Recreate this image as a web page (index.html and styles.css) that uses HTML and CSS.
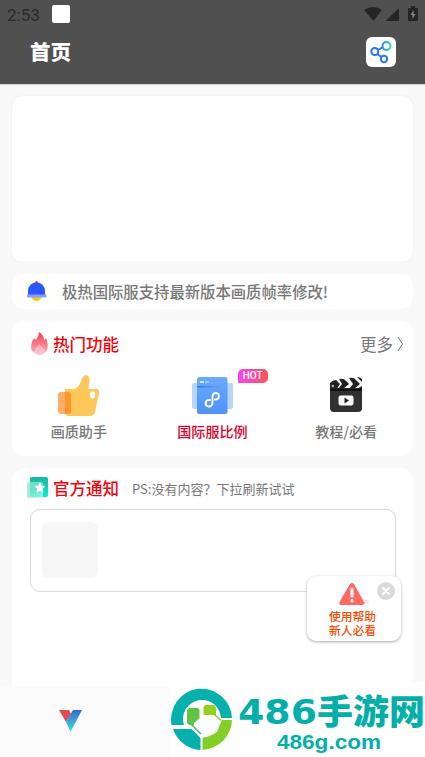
FILE: index.html
```html
<!DOCTYPE html>
<html lang="zh-CN">
<head>
<meta charset="utf-8">
<title>首页</title>
<link rel="stylesheet" href="styles.css">
</head>
<body>
<header class="header">
  <div class="status">
    <span class="time">2:53</span><span class="chip"></span>
    <svg class="signals" width="56" height="18" viewBox="0 0 56 18">
      <path d="M0 5Q9 -1 18 5L9.500 16Z"/><path d="M35 3V16H21.500Z"/>
      <path d="M45 3h2V1h4v2h2q1 0 1 1v11q0 1-1 1h-8q-1 0-1-1V4q0-1 1-1Z"/>
      <path class="bolt" d="M49.500 5L46.500 10H48.500V14L51.500 9H49.500Z"/>
    </svg>
  </div>
  <div class="titlebar">
    <h1>首页</h1>
    <div class="share">
      <svg width="30" height="30" viewBox="0 0 30 30" fill="none" stroke-width="2">
        <defs><linearGradient id="sg" x1="0" x2="1"><stop stop-color="#278de8"/><stop offset="1" stop-color="#35d6b2"/></linearGradient></defs>
        <path d="M12 13L17 10M11 17L16 20" stroke="#2873f0"/><circle cx="8.800" cy="14.500" r="3.500" stroke="#2873ff"/><circle cx="20.500" cy="9" r="4" stroke="url(#sg)"/><circle cx="18" cy="22" r="3.200" stroke="#2873ff"/>
      </svg>
    </div>
  </div>
</header>
<main class="content">
  <section class="banner"></section>
  <section class="notice">
    <svg width="20" height="20" viewBox="0 0 20 20"><circle cx="9.500" cy="1.500" r="1.500" fill="#f33748"/><path d="M4 16h11q-2 4-5.500 4T4 16Z" fill="#ffc919"/><path d="M1 14V10a8.500 8.800 0 0 1 17 0v4Z" fill="#2857ff"/><rect y="13.500" width="19.500" height="3" rx="1" fill="#829eff"/></svg>
    <span>极热国际服支持最新版本画质帧率修改!</span>
  </section>
  <section class="features">
    <div class="heading">
      <svg width="20" height="24" viewBox="0 0 20 24">
        <defs><linearGradient id="fg" x2="0" y2="1"><stop stop-color="#f63e49"/><stop offset="1" stop-color="#ffb1bc"/></linearGradient><filter id="soft" x="-20%" y="-20%" width="140%" height="140%"><feGaussianBlur stdDeviation=".65"/></filter></defs>
        <path d="M10 0q5 3 5 8l2-2q3 8 1 12-3 5-8 4-8-1-8-7 0-5 3-9l2 2q3-4 3-8Z" fill="url(#fg)" filter="url(#soft)"/><path d="M10 12q4 3 6 7-2 4-6 4-4 0-5-4 2 0 2-3 2-1 3-4Z" fill="#ffc0cc" opacity=".85"/>
      </svg>
      <h2>热门功能</h2><span class="more">更多</span>
      <svg class="arrow" width="7" height="16" viewBox="0 0 7 16" fill="none" stroke="#777"><path d="M1 1L5.500 8L1 15"/></svg>
    </div>
    <div class="grid">
      <div class="item">
        <svg width="44" height="44" viewBox="0 0 44 44"><path d="M8 16h10q4-2 6-8 2-6 5-6 6 1 2 14h8q4 0 3 4l-4 19q-1 4-5 4H12q-4 0-4-4Z" fill="#ffc75a"/><rect x="33" y="18.500" width="5" height="7" rx="2" fill="#fff"/><rect x="1" y="19" width="13" height="22" rx="3" fill="#ffae6a"/><path d="M8 19h3q3 0 3 3v16q0 3-3 3H8Z" fill="#ff962c"/></svg>
        <span>画质助手</span>
      </div>
      <div class="item selected">
        <svg width="42" height="38" viewBox="0 0 42 38"><defs><linearGradient id="bg" x2="0" y2="1"><stop stop-color="#6aabff"/><stop offset="1" stop-color="#4d91fa"/></linearGradient><linearGradient id="line"><stop stop-color="#347bdd"/><stop offset="1" stop-color="#60a4fc"/></linearGradient></defs><rect x="1" y="7" width="41" height="26" rx="2" fill="#b7d5ff"/><rect x="6" y="1" width="30.500" height="37" rx="2.500" fill="url(#bg)"/><path d="M6 10h24v1.500H6Z" fill="url(#line)"/><path d="M9 6h4" stroke="#fff" stroke-width="1.500"/><path d="M14 6h4" stroke="#a9d0ff" stroke-width="1.500"/><path d="M19 24c-5-1-6 6-1.500 6.500 3 .3 4-2 4-4.500v-5c0-2 1-4 3.500-4 4.500 .5 3.500 7-1 6.500" fill="none" stroke="#fff" stroke-width="2" stroke-linecap="round"/></svg>
        <span>国际服比例</span><b class="hot">HOT</b>
      </div>
      <div class="item">
        <svg width="34" height="36" viewBox="0 0 34 36"><path d="M1 11h32v20q0 4-4 4H5q-4 0-4-4Z" fill="#303030"/><path d="M1 11V6q3-3 6-3l4 4-4 6H1ZM10 2q5-1 7 2l3 3-6 5H9l4-5ZM20 1q5-1 7 2l4 4-6 5h-5l4-5ZM28 0q3 0 5 2v3ZM33 9v3h-5Z" fill="#202122"/><circle cx="3.800" cy="9" r="1.300" fill="#aaa"/><path d="M1 12h32v2H1Z" fill="#111"/><rect x="9.500" y="18.500" width="15" height="10" rx="2" fill="#fff"/><path d="M15.500 20.500v6l4.500-3Z" fill="#222"/></svg>
        <span>教程/必看</span>
      </div>
    </div>
  </section>
  <section class="official">
    <div class="heading">
      <svg width="22" height="23" viewBox="0 0 22 23"><defs><linearGradient id="gg" x2="0" y2="1"><stop stop-color="#18b7a0"/><stop offset="1" stop-color="#08ecd0"/></linearGradient><linearGradient id="hg" y2="1"><stop stop-color="#8fe6d3"/><stop offset=".5" stop-color="#8fe6d3"/><stop offset="1" stop-color="#d0f7ef"/></linearGradient></defs><rect x="3" width="18" height="20" rx="2" fill="url(#gg)"/><path d="M2 5h12q2 0 2 2v12q0 2-2 2H2q-2 0-2-2V7q0-2 2-2Z" fill="url(#hg)" opacity=".75"/><path d="M13 5l1.700 3.500 3.800.5-2.700 2.700.6 3.800-3.400-1.800-3.400 1.800.6-3.800L7.500 9l3.800-.5Z" fill="#fff"/></svg>
      <h2>官方通知</h2><span class="tip">PS:没有内容？下拉刷新试试</span>
    </div>
    <div class="message"><div class="thumb"></div></div>
  </section>
</main>
<footer class="footer">
  <svg class="vlogo" width="23" height="22" viewBox="0 0 23 22"><defs><linearGradient id="vb" x2="0" y2="1"><stop stop-color="#356ad0"/><stop offset="1" stop-color="#45e0df"/></linearGradient><linearGradient id="vr" x2="0" y2="1"><stop stop-color="#dc513d"/><stop offset="1" stop-color="#ed3f70"/></linearGradient></defs><path d="M0 0h10l2 4-5 8Z" fill="url(#vr)"/><path d="M14 0h9L11.500 22 7 12Z" fill="url(#vb)"/></svg>
  <svg class="brand" width="255" height="75" viewBox="170 682 255 75">
    <rect x="170" y="682" width="255" height="75" fill="#fefffe"/>
    <path d="M171.500 725A30.500 31 0 1 1 232 718H221A19 19 0 1 0 184 725Z" fill="#04b1ad"/>
    <path d="M173 729H192L200.500 738V750A31 31 0 0 1 173 729Z" fill="#04b1ad"/>
    <path d="M232 720H222L214 734 202.500 738V750A31 31 0 0 0 232 720Z" fill="#83cf28"/>
    <path d="M202 700A19 19 0 0 1 220 718L221 722 217 732 207 737 201 736 184 724Q185 702 202 700Z" fill="#fff"/>
    <path d="M189 708H198L199.500 710V718L194 723V725H189L187 723V710Z" fill="#5fc343"/><path d="M205 705H214L216 708V715H203.500V707Z" fill="#93d019"/><path d="M214 714L221 720.500" stroke="#83cf28" stroke-width="1.500"/><path d="M190 723L201 734" stroke="#47bd72" stroke-width="1.500"/>
    <text class="brandnum" x="238" y="724" textLength="79" lengthAdjust="spacingAndGlyphs">486</text>
    <text class="brandcn" x="317" y="724" textLength="108" lengthAdjust="spacingAndGlyphs">手游网</text>
    <text class="brandurl" x="277" y="749" textLength="104" lengthAdjust="spacingAndGlyphs">486g.com</text>
  </svg>
</footer>
<aside class="help">
  <svg class="warning" width="31" height="22" viewBox="0 0 31 22"><ellipse cx="25" cy="18.500" rx="5" ry="2" fill="#ffdedb"/><path d="M11 1q2-2 4 0l10 18q1 3-2 3H2q-3 0-1-4Z" fill="#ff6863"/><path d="M13 6v7M13 17.500v.5" stroke="#fff" stroke-width="3" stroke-linecap="round"/></svg>
  <span>使用帮助</span><span>新人必看</span>
  <svg class="close" width="18" height="18" viewBox="0 0 18 18"><circle cx="9" cy="9" r="9" fill="#dadada"/><path d="M6 6l6 6M12 6l-6 6" stroke="#fff" stroke-width="2" stroke-linecap="round"/></svg>
</aside>
</body>
</html>
```
FILE: styles.css
```css
* { box-sizing: border-box; }
body { margin: 0; width: 425px; height: 757px; overflow: hidden; position: relative; display: flex; flex-direction: column; background: #f9f9f9; color: #777; font-family: "Noto Sans CJK SC", sans-serif; }
svg { display: block; flex: none; }
h1, h2 { margin: 0; white-space: nowrap; }
span { white-space: nowrap; }
.header { height: 84px; flex: none; background: #505050; box-shadow: 0 1px 1px #d5d5d5; }
.status { height: 28px; display: flex; align-items: center; padding-left: 7px; }
.time { width: 45px; font: 17px/20px Roboto, sans-serif; color: #292929; padding-top: 2px; }
.chip { width: 18px; height: 18px; border-radius: 2px; background: #fff; }
.signals { margin: 0 5px 0 auto; fill: #252525; }
.signals .bolt { fill: #888; }
.titlebar { height: 48px; display: flex; align-items: center; justify-content: space-between; padding: 0 29px 0 30px; }
h1 { font-size: 20.5px; line-height: 30px; font-weight: 900; color: #fff; margin-top: -2px; }
.share { width: 30px; height: 30px; border-radius: 6px; background: #fff; }
.content { height: 602px; flex: none; padding: 12px 12px 0; display: flex; flex-direction: column; gap: 12px; }
.content section { background: #fff; border-radius: 12px; flex: none; }
.content .banner { height: 166px; box-shadow: 0 0 1px #ccc; border-radius: 10px; }
.content .notice { height: 35px; display: flex; align-items: center; gap: 15px; padding: 0 0 2px 15px; font-size: 15.35px; font-weight: 500; }
.features { height: 135px; }
.heading { height: 45px; padding: 0 8px 0 17px; display: flex; align-items: center; gap: 5px; }
.features .heading { padding-right: 9px; gap: 4px; }
.features .heading + .grid { margin-top: 2px; }
.heading h2 { font-size: 16.5px; line-height: 24px; font-weight: 500; color: #f8000b; }
.more { margin-left: auto; font-size: 16.5px; font-weight: 400; }
.grid { display: grid; grid-template-columns: repeat(3, 1fr); height: 88px; }
.item { position: relative; display: grid; grid-template-rows: 53px 20px; justify-items: center; align-items: center; align-content: start; font-size: 14.1px; line-height: 20px; font-weight: 500; }
.selected { color: #e40027; }
.hot { position: absolute; left: 92px; top: 1px; width: 30px; height: 14px; border-radius: 5px 5px 5px 1px; background: linear-gradient(90deg, #f743f4, #ff5351); color: #fff; font: 500 10px/14px Roboto, sans-serif; text-align: center; }
.content .official { height: 218px; border-radius: 12px 12px 0 0; }
.official .heading { height: 41px; padding: 0 0 1px 15px; gap: 4px; }
.tip { font-size: 13px; font-weight: 400; margin-left: 9px; }
.message { width: 366px; height: 83px; margin-left: 18px; padding: 12px 11px; border: 1px solid #dadada; border-radius: 10px; box-shadow: 0 0 1px #ddd; }
.thumb { width: 56px; height: 56px; border-radius: 7px; background: #f7f7f7; }
.footer { height: 71px; flex: none; background: #fbfbfb; display: flex; align-items: center; padding-left: 59px; }
.vlogo { margin-top: -2px; }
.brand { margin: -4px 0 0 88px; }
.brand text { fill: #04afaa; }
.brandnum { font: 700 33px "DejaVu Sans", sans-serif; }
.brandcn { font: 900 34px "Noto Sans CJK SC", sans-serif; }
.brandurl { font: 700 20px "Liberation Sans", sans-serif; }
.help { position: absolute; left: 307px; top: 576px; width: 94px; height: 65px; border-radius: 9px; background: #fff; box-shadow: 0 1px 3px #aaa; color: #ff4b00; font-size: 11.8px; line-height: 14px; font-weight: 500; }
.warning { margin: 7px 0 4px 32px; }
.help span { display: block; text-align: center; margin-left: -3px; }
.close { position: absolute; right: 6px; top: 6px; }
```
